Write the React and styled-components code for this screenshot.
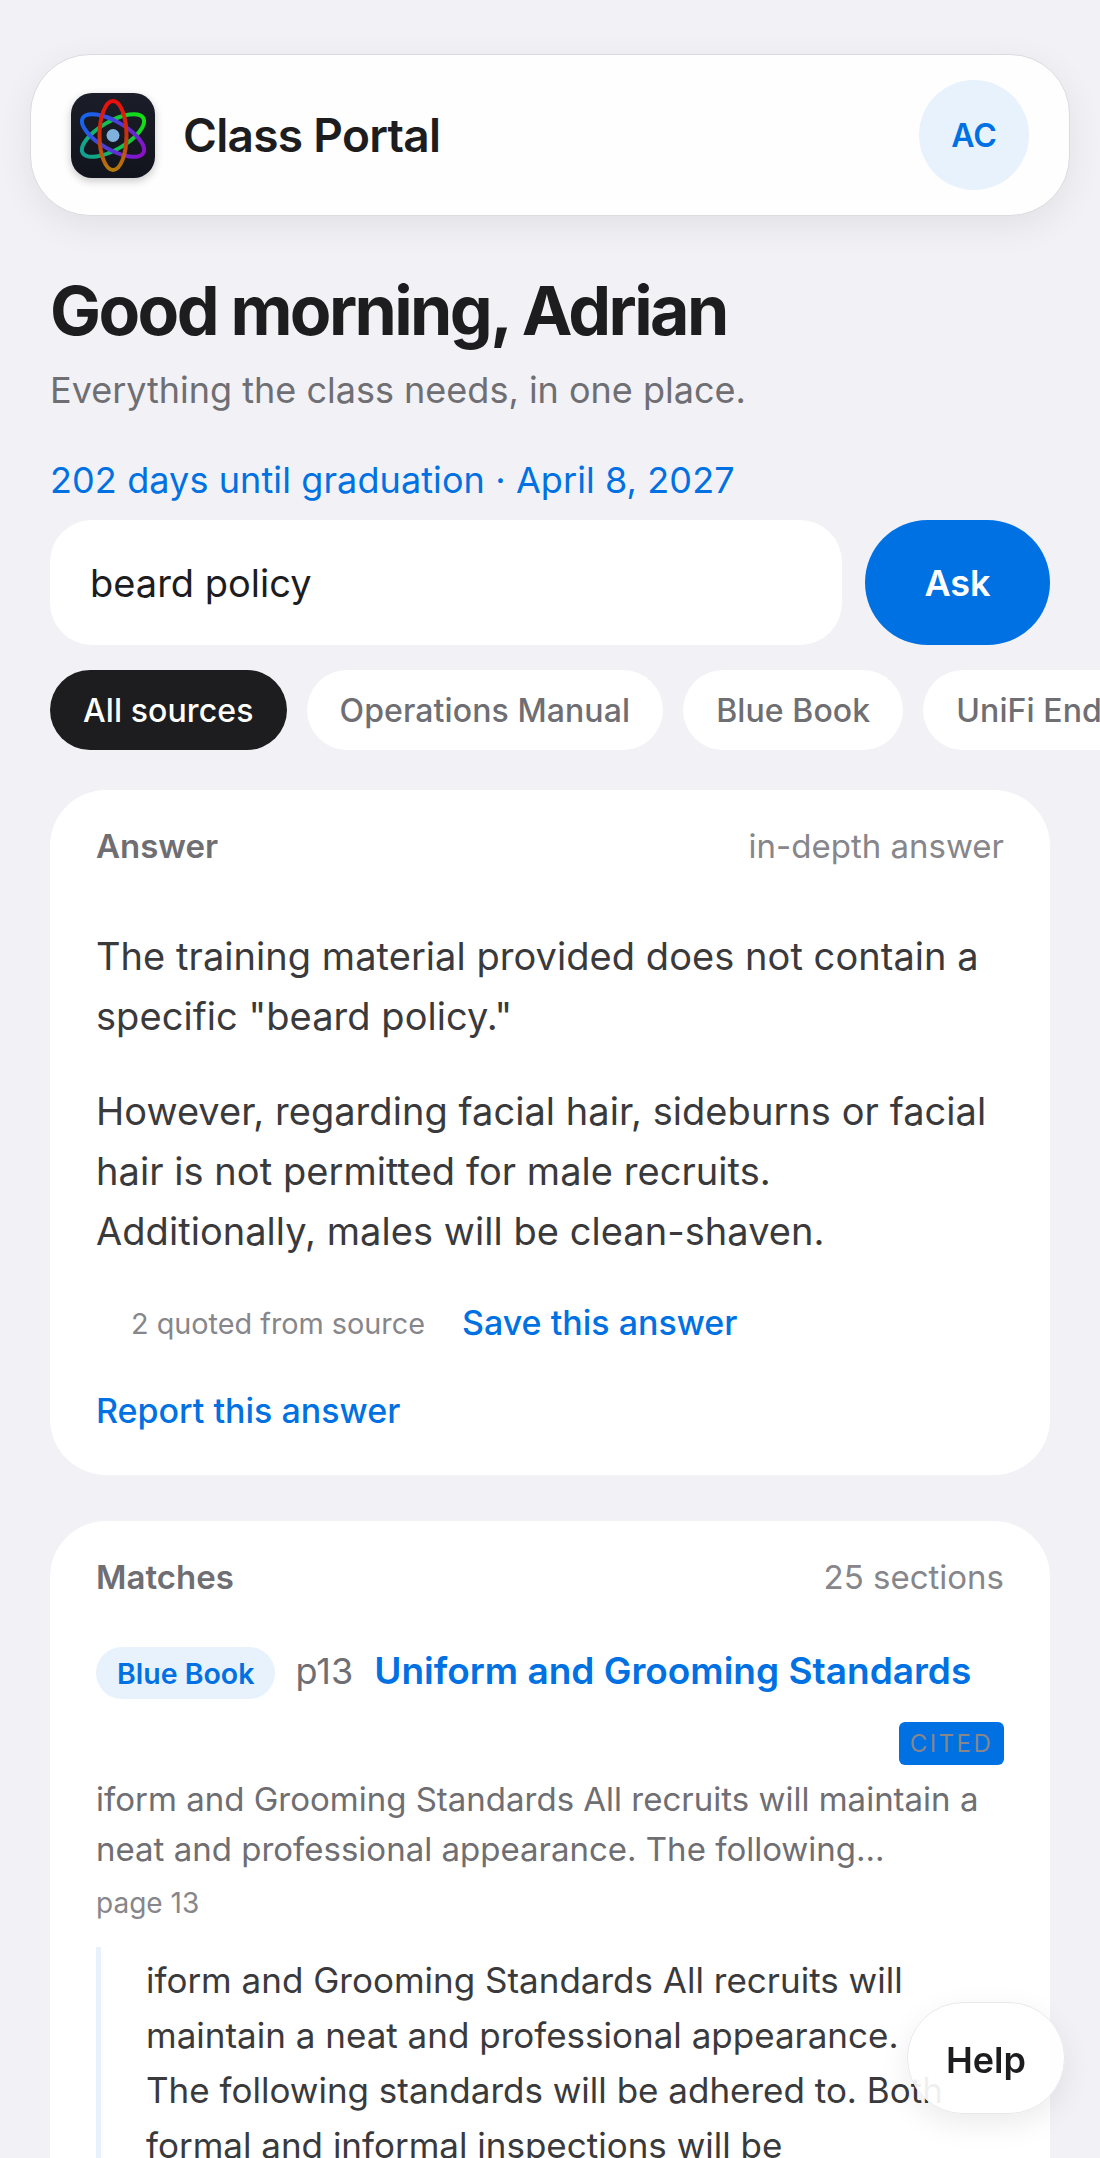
import React from 'react';
import styled, { createGlobalStyle } from 'styled-components';

const blue = '#0071e3';
const ink = '#1d1d1f';
const body = '#3a3a3c';
const muted = '#6e6e73';
const faint = '#86868b';
const tint = '#e8f2fc';

const GlobalStyle = createGlobalStyle`
  html, body {
    margin: 0;
    height: 2158px;
    overflow: hidden;
    background: #f1f1f6;
    font-family: Inter, "Noto Sans", sans-serif;
  }
  * { box-sizing: border-box; }
`;

const Page = styled.div`
  padding: 54px 50px 0;
`;

const Header = styled.header`
  display: flex;
  align-items: center;
  justify-content: space-between;
  height: 162px;
  margin: 0 -20px;
  padding: 0 40px;
  background: #fefefe;
  border: 1px solid #dcdce0;
  border-radius: 60px;
  box-shadow: 0 10px 36px rgba(0, 0, 0, 0.07);
`;

const Brand = styled.div`
  display: flex;
  align-items: center;
  gap: 28px;
`;

const LogoMark = styled.svg`
  display: block;
  width: 84px;
  height: 85px;
  border-radius: 21px;
  box-shadow: 0 3px 8px rgba(0, 0, 0, 0.22);
`;

const BrandName = styled.div`
  font-size: 46px;
  font-weight: 600;
  letter-spacing: -0.7px;
  color: ${ink};
`;

const Avatar = styled.div`
  display: flex;
  align-items: center;
  justify-content: center;
  width: 110px;
  height: 110px;
  border-radius: 50%;
  background: ${tint};
  color: ${blue};
  font-size: 32px;
  font-weight: 600;
`;

const Greeting = styled.h1`
  margin: 54px 0 0;
  font-size: 68px;
  line-height: 80px;
  font-weight: 700;
  letter-spacing: -2.6px;
  color: ${ink};
`;

const Subtitle = styled.p`
  margin: 15px 0 0;
  font-size: 36px;
  line-height: 50px;
  color: ${muted};
`;

const Countdown = styled.p`
  margin: 40px 0 0;
  font-size: 36px;
  line-height: 50px;
  letter-spacing: 0.1px;
  color: ${blue};
`;

const SearchRow = styled.form`
  display: flex;
  gap: 23px;
  margin-top: 15px;
`;

const SearchInput = styled.div`
  display: flex;
  align-items: center;
  flex: 1;
  height: 125px;
  padding: 0 40px;
  background: #fff;
  border-radius: 42px;
  font-size: 38px;
  color: ${ink};
`;

const AskButton = styled.button`
  width: 185px;
  height: 125px;
  border: 0;
  border-radius: 63px;
  background: ${blue};
  color: #fff;
  font: 600 36px Inter, sans-serif;
`;

const Chips = styled.div`
  display: flex;
  gap: 20px;
  margin: 25px -50px 0 0;
  overflow: hidden;
`;

const Chip = styled.div`
  flex: none;
  display: flex;
  align-items: center;
  height: 80px;
  padding: 0 33px;
  border-radius: 40px;
  background: ${(p) => (p.$active ? ink : '#fff')};
  color: ${(p) => (p.$active ? '#fff' : muted)};
  font-size: 32px;
  font-weight: 500;
  letter-spacing: 0.1px;
`;

const Card = styled.section`
  margin-top: ${(p) => p.$gap}px;
  padding: 36px 46px 39px;
  background: #fff;
  border-radius: 56px;
`;

const CardHead = styled.div`
  display: flex;
  justify-content: space-between;
  font-size: 33px;
  line-height: 40px;
`;

const CardTitle = styled.div`
  font-weight: 600;
  color: ${muted};
`;

const CardMeta = styled.div`
  color: ${faint};
`;

const Para = styled.p`
  margin: ${(p) => p.$top}px 0 0;
  max-width: 895px;
  font-size: 38px;
  line-height: 60px;
  letter-spacing: 0.05px;
  color: ${body};
`;

const SourceRow = styled.div`
  display: flex;
  align-items: center;
  gap: 37px;
  height: 50px;
  margin-top: 37px;
  padding-left: 35px;
`;

const QuoteCount = styled.span`
  font-size: 28.8px;
  color: ${faint};
`;

const TextLink = styled.a`
  display: block;
  font-size: 34px;
  line-height: 50px;
  font-weight: 500;
  color: ${blue};
`;

const ReportRow = styled.div`
  margin-top: 38px;
`;

const MatchHead = styled.div`
  display: flex;
  flex-wrap: wrap;
  align-items: baseline;
  row-gap: 23px;
  margin-top: 50px;
`;

const SourcePill = styled.span`
  display: inline-flex;
  align-items: center;
  height: 52px;
  padding: 0 21px;
  border-radius: 26px;
  background: ${tint};
  color: ${blue};
  font-size: 28.5px;
  font-weight: 600;
`;

const PageRef = styled.span`
  margin: 0 21px 0 20px;
  font-size: 36px;
  color: ${muted};
`;

const MatchTitle = styled.a`
  font-size: 37px;
  font-weight: 600;
  color: ${blue};
`;

const CitedBadge = styled.span`
  margin-left: auto;
  width: 105px;
  height: 43px;
  line-height: 43px;
  text-align: center;
  border-radius: 6px;
  background: ${blue};
  color: ${faint};
  font-size: 24px;
  letter-spacing: 2.5px;
`;

const Snippet = styled.p`
  margin: 9px 0 0;
  font-size: 33px;
  line-height: 50px;
  color: ${muted};
`;

const PageLabel = styled.div`
  margin-top: 9px;
  font-size: 28px;
  line-height: 40px;
  color: ${faint};
`;

const Quote = styled.blockquote`
  margin: 24px 0 0;
  padding: 6px 46px 0 45px;
  border-left: 5px solid ${tint};
  font-size: 35px;
  line-height: 55px;
  color: ${body};
`;

const HelpButton = styled.button`
  position: fixed;
  right: 35px;
  bottom: 44px;
  width: 158px;
  height: 112px;
  padding: 4px 0 0;
  border: 1px solid #e8e8ec;
  border-radius: 56px;
  background: rgba(255, 255, 255, 0.92);
  box-shadow: 0 10px 30px rgba(0, 0, 0, 0.08);
  color: ${ink};
  font: 600 36px Inter, sans-serif;
`;

function Logo() {
  return (
    <LogoMark viewBox="0 0 84 85">
      <defs>
        <linearGradient id="tile" x1="0" y1="0" x2="0" y2="1">
          <stop offset="0" stopColor="#1b1e28" />
          <stop offset="1" stopColor="#11141c" />
        </linearGradient>
        <linearGradient id="vert" x1="0" y1="0" x2="0" y2="1">
          <stop offset="0" stopColor="#ea0f0c" />
          <stop offset="0.5" stopColor="#c9300e" />
          <stop offset="1" stopColor="#b37a0c" />
        </linearGradient>
        <linearGradient id="bp" x1="0" y1="0" x2="1" y2="0">
          <stop offset="0" stopColor="#1466f0" />
          <stop offset="1" stopColor="#8a10c8" />
        </linearGradient>
        <linearGradient id="gt" x1="0" y1="0" x2="1" y2="0">
          <stop offset="0" stopColor="#12a094" />
          <stop offset="1" stopColor="#12e012" />
        </linearGradient>
      </defs>
      <rect width="84" height="85" fill="url(#tile)" />
      <ellipse cx="42" cy="42.5" rx="35" ry="14" fill="none" stroke="url(#gt)" strokeWidth="4" transform="rotate(-30 42 42.5)" />
      <ellipse cx="42" cy="42.5" rx="35" ry="14" fill="none" stroke="url(#bp)" strokeWidth="4" transform="rotate(30 42 42.5)" />
      <ellipse cx="42" cy="42.5" rx="13.5" ry="34.5" fill="none" stroke="url(#vert)" strokeWidth="4" />
      <circle cx="42" cy="42.5" r="6.5" fill="#7fb1dc" />
    </LogoMark>
  );
}

export default function App() {
  return (
    <>
      <GlobalStyle />
      <Page>
        <Header>
          <Brand>
            <Logo />
            <BrandName>Class Portal</BrandName>
          </Brand>
          <Avatar>AC</Avatar>
        </Header>

        <Greeting>Good morning, Adrian</Greeting>
        <Subtitle>Everything the class needs, in one place.</Subtitle>
        <Countdown>202 days until graduation · April 8, 2027</Countdown>

        <SearchRow>
          <SearchInput>beard policy</SearchInput>
          <AskButton type="button">Ask</AskButton>
        </SearchRow>

        <Chips>
          <Chip $active>All sources</Chip>
          <Chip>Operations Manual</Chip>
          <Chip>Blue Book</Chip>
          <Chip>UniFi Endpoint</Chip>
        </Chips>

        <Card $gap={40}>
          <CardHead>
            <CardTitle>Answer</CardTitle>
            <CardMeta>in-depth answer</CardMeta>
          </CardHead>
          <Para $top={60}>The training material provided does not contain a specific "beard policy."</Para>
          <Para $top={35}>However, regarding facial hair, sideburns or facial hair is not permitted for male recruits. Additionally, males will be clean-shaven.</Para>
          <SourceRow>
            <QuoteCount>2 quoted from source</QuoteCount>
            <TextLink>Save this answer</TextLink>
          </SourceRow>
          <ReportRow>
            <TextLink>Report this answer</TextLink>
          </ReportRow>
        </Card>

        <Card $gap={46}>
          <CardHead>
            <CardTitle>Matches</CardTitle>
            <CardMeta>25 sections</CardMeta>
          </CardHead>
          <MatchHead>
            <SourcePill>Blue Book</SourcePill>
            <PageRef>p13</PageRef>
            <MatchTitle>Uniform and Grooming Standards</MatchTitle>
            <CitedBadge>CITED</CitedBadge>
          </MatchHead>
          <Snippet>iform and Grooming Standards All recruits will maintain a neat and professional appearance. The following…</Snippet>
          <PageLabel>page 13</PageLabel>
          <Quote>iform and Grooming Standards All recruits will maintain a neat and professional appearance. The following standards will be adhered to. Both formal and informal inspections will be</Quote>
        </Card>
      </Page>
      <HelpButton type="button">Help</HelpButton>
    </>
  );
}
